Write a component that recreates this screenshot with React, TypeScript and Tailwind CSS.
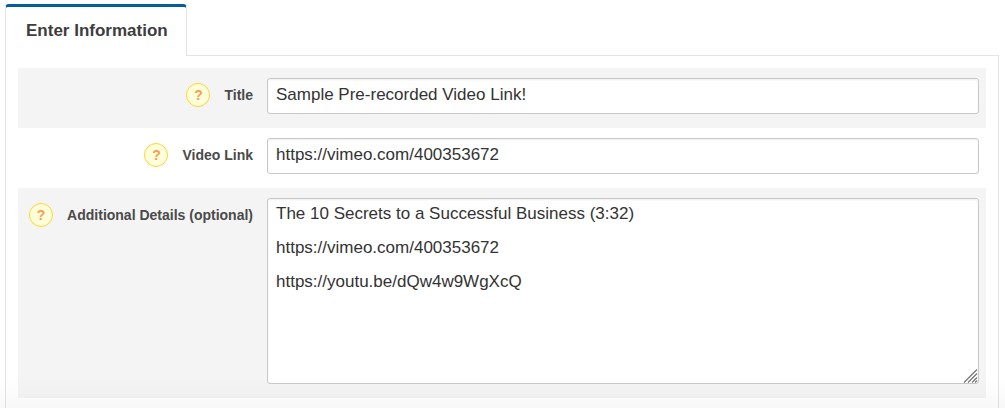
import { useState, type ReactNode } from "react";

const fieldClass =
  "block w-full rounded-[3px] border border-[#c8c8c8] bg-white px-2 text-[17px] text-[#333] shadow-[inset_0_1px_2px_rgba(0,0,0,0.07)] outline-none";

export default function App() {
  const [title, setTitle] = useState("Sample Pre-recorded Video Link!");
  const [link, setLink] = useState("https://vimeo.com/400353672");
  const [details, setDetails] = useState(
    "The 10 Secrets to a Successful Business (3:32)\n\nhttps://vimeo.com/400353672\n\nhttps://youtu.be/dQw4w9WgXcQ",
  );

  return (
    <div className="relative flex min-h-screen flex-col bg-white pt-1 pr-1.5 pl-[5px] font-['Liberation_Sans',Arial,sans-serif]">
      <div role="tablist" className="flex">
        <button
          type="button"
          role="tab"
          aria-selected="true"
          className="relative z-10 -mb-px rounded-t-[4px] border-x border-t-[3px] border-x-[#e4e4e4] border-t-[#00609c] bg-white pt-3 pr-[18px] pb-[13px] pl-5 text-[17px] leading-6 font-bold text-[#3d3d3d]"
        >
          Enter Information
        </button>
      </div>

      <form className="flex-1 border border-b-0 border-[#e4e4e4] p-3" onSubmit={(e) => e.preventDefault()}>
        <Row id="title" label="Title" shaded>
          <input id="title" type="text" value={title} onChange={(e) => setTitle(e.target.value)} className={`${fieldClass} h-9 pb-0.5`} />
        </Row>
        <Row id="link" label="Video Link">
          <input id="link" type="text" value={link} onChange={(e) => setLink(e.target.value)} className={`${fieldClass} h-9 pb-0.5`} />
        </Row>
        <Row id="details" label="Additional Details (optional)" shaded>
          <textarea
            id="details"
            value={details}
            onChange={(e) => setDetails(e.target.value)}
            className={`${fieldClass} h-[186px] resize-none py-1.5 leading-[17px]`}
          />
          <ResizeGrip />
        </Row>
      </form>

      <div className="pointer-events-none absolute inset-x-0 bottom-0 h-8 bg-gradient-to-b from-transparent to-black/[0.03]" />
    </div>
  );
}

function Row({ id, label, shaded, children }: { id: string; label: string; shaded?: boolean; children: ReactNode }) {
  return (
    <div className={`flex items-start pt-2.5 pr-[7px] pb-3.5 pl-2 ${shaded ? "bg-[#f4f4f4]" : ""}`}>
      <div className="flex w-[227px] shrink-0 items-center justify-end gap-3.5 pt-[5px]">
        <button
          type="button"
          aria-label={`Help: ${label}`}
          className="flex size-6 shrink-0 items-center justify-center rounded-full border border-[#ffd52e] bg-[#ffffd9] text-sm leading-6 font-bold text-[#ff9a4d]"
        >
          ?
        </button>
        <label htmlFor={id} className="text-sm leading-6 font-bold whitespace-nowrap text-[#4a4a4a]">
          {label}
        </label>
      </div>
      <div className="relative ml-3.5 min-w-0 flex-1">{children}</div>
    </div>
  );
}

function ResizeGrip() {
  return (
    <svg aria-hidden="true" viewBox="0 0 15 15" className="pointer-events-none absolute right-px bottom-px size-[15px]" fill="none" stroke="#777" strokeWidth="1.2">
      <path d="M1 14.5L14 1.5M5 14.5L14 5.5M9 14.5L14 9.5M12 14.5L14 12.5" />
    </svg>
  );
}
